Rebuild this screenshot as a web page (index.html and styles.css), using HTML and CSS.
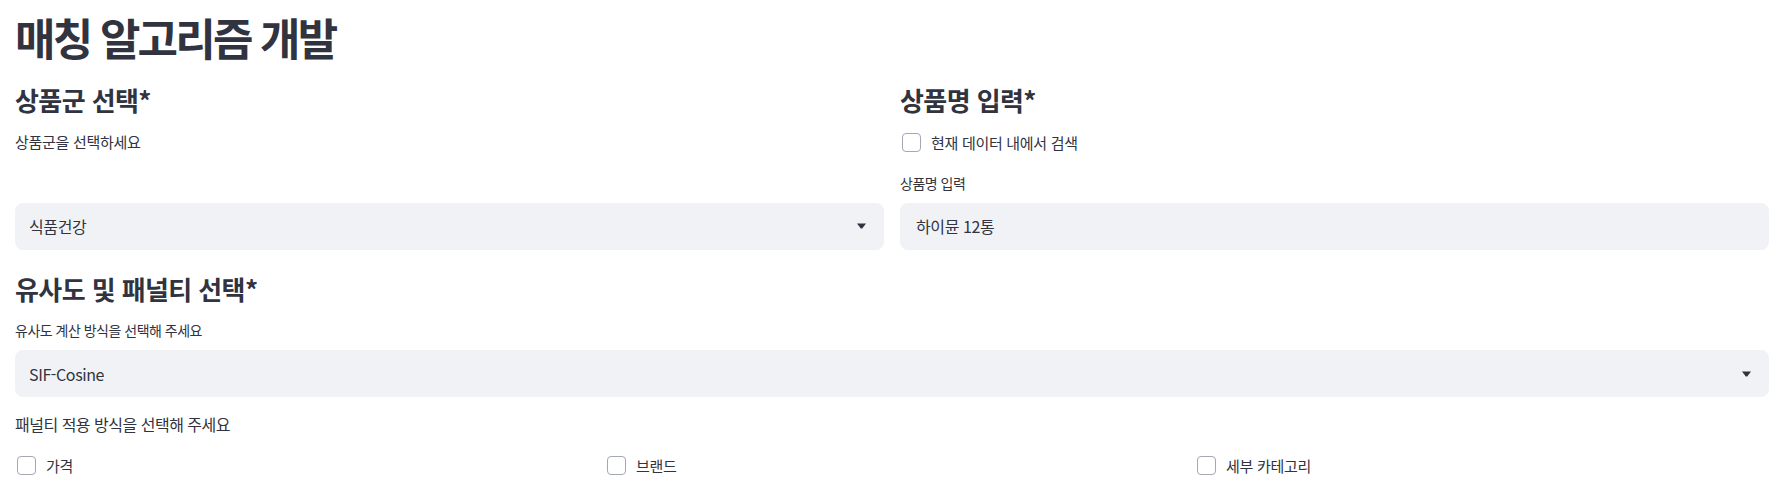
FILE: index.html
```html
<!DOCTYPE html>
<html lang="ko">
<head>
<meta charset="utf-8">
<title>매칭 알고리즘 개발</title>
<link rel="stylesheet" href="styles.css">
</head>
<body>
<main class="page">
  <h1 class="title">매칭 알고리즘 개발</h1>

  <div class="cols2">
    <section class="col">
      <h3 class="sub">상품군 선택*</h3>
      <p class="md md-first">상품군을 선택하세요</p>
      <div class="select">
        <span class="value">식품건강</span>
        <svg class="caret" width="9" height="6" viewBox="0 0 9 6"><path d="M0 0.5 H9 L5.2 5.5 H3.8 Z" fill="#31333F"/></svg>
      </div>
    </section>
    <section class="col">
      <h3 class="sub">상품명 입력*</h3>
      <label class="check check-first"><span class="box"></span><span class="check-text">현재 데이터 내에서 검색</span></label>
      <div class="label">상품명 입력</div>
      <div class="input"><span class="value">하이뮨 12통</span></div>
    </section>
  </div>

  <h3 class="sub sub-second">유사도 및 패널티 선택*</h3>
  <div class="label">유사도 계산 방식을 선택해 주세요</div>
  <div class="select">
    <span class="value">SIF-Cosine</span>
    <svg class="caret" width="9" height="6" viewBox="0 0 9 6"><path d="M0 0.5 H9 L5.2 5.5 H3.8 Z" fill="#31333F"/></svg>
  </div>
  <p class="md md-second">패널티 적용 방식을 선택해 주세요</p>
  <div class="cols3">
    <label class="check"><span class="box"></span><span class="check-text">가격</span></label>
    <label class="check"><span class="box"></span><span class="check-text">브랜드</span></label>
    <label class="check"><span class="box"></span><span class="check-text">세부 카테고리</span></label>
  </div>
</main>
</body>
</html>
```

FILE: styles.css
```css
* { box-sizing: border-box; }

html, body {
  margin: 0;
  padding: 0;
  background: #ffffff;
}

body {
  font-family: "Noto Sans CJK KR", "Noto Sans", sans-serif;
  color: #31333F;
}

.page {
  padding: 0 10px 0 15px;
}

.title {
  margin: 11px 0 0 0;
  font-size: 44px;
  line-height: 1.2;
  font-weight: 700;
  letter-spacing: -2.8px;
}

.sub {
  margin: 20px 0 0 0;
  font-size: 26px;
  line-height: 1.2;
  font-weight: 700;
  letter-spacing: -0.6px;
}

.sub-second {
  margin-top: 23px;
}

.cols2 {
  display: grid;
  grid-template-columns: 1fr 1fr;
  column-gap: 16px;
}

.col {
  display: flex;
  flex-direction: column;
}

.col .select {
  margin-top: auto;
}

.md {
  margin: 0;
  font-size: 15px;
  line-height: 1.5;
  letter-spacing: -0.3px;
}

.md-first {
  margin-top: 16px;
}

.md-second {
  margin-top: 15px;
  font-size: 16px;
  letter-spacing: -0.5px;
}

.label {
  font-size: 14px;
  line-height: 21px;
  letter-spacing: -0.5px;
  margin-bottom: 9px;
}

.sub-second + .label {
  margin-top: 16px;
}

.col .label {
  margin-top: 18px;
}

.select, .input {
  height: 47px;
  background: #F0F2F6;
  border-radius: 8px;
  display: flex;
  align-items: center;
  padding: 0 14px;
  font-size: 16px;
  letter-spacing: -0.4px;
}

.select {
  justify-content: space-between;
  padding-right: 18px;
}

.input {
  padding-left: 16px;
}

.caret {
  display: block;
}

.check {
  display: flex;
  align-items: center;
  height: 24px;
  gap: 10px;
  font-size: 15px;
  letter-spacing: -0.3px;
}

.check-first {
  margin-top: 16px;
}

.box {
  width: 19px;
  height: 19px;
  margin-left: 2px;
  border: 1.5px solid #A3A8B4;
  border-radius: 4px;
  background: #fff;
  flex: none;
}

.cols3 {
  display: grid;
  grid-template-columns: repeat(3, 1fr);
  column-gap: 16px;
  margin-top: 17px;
}
```
